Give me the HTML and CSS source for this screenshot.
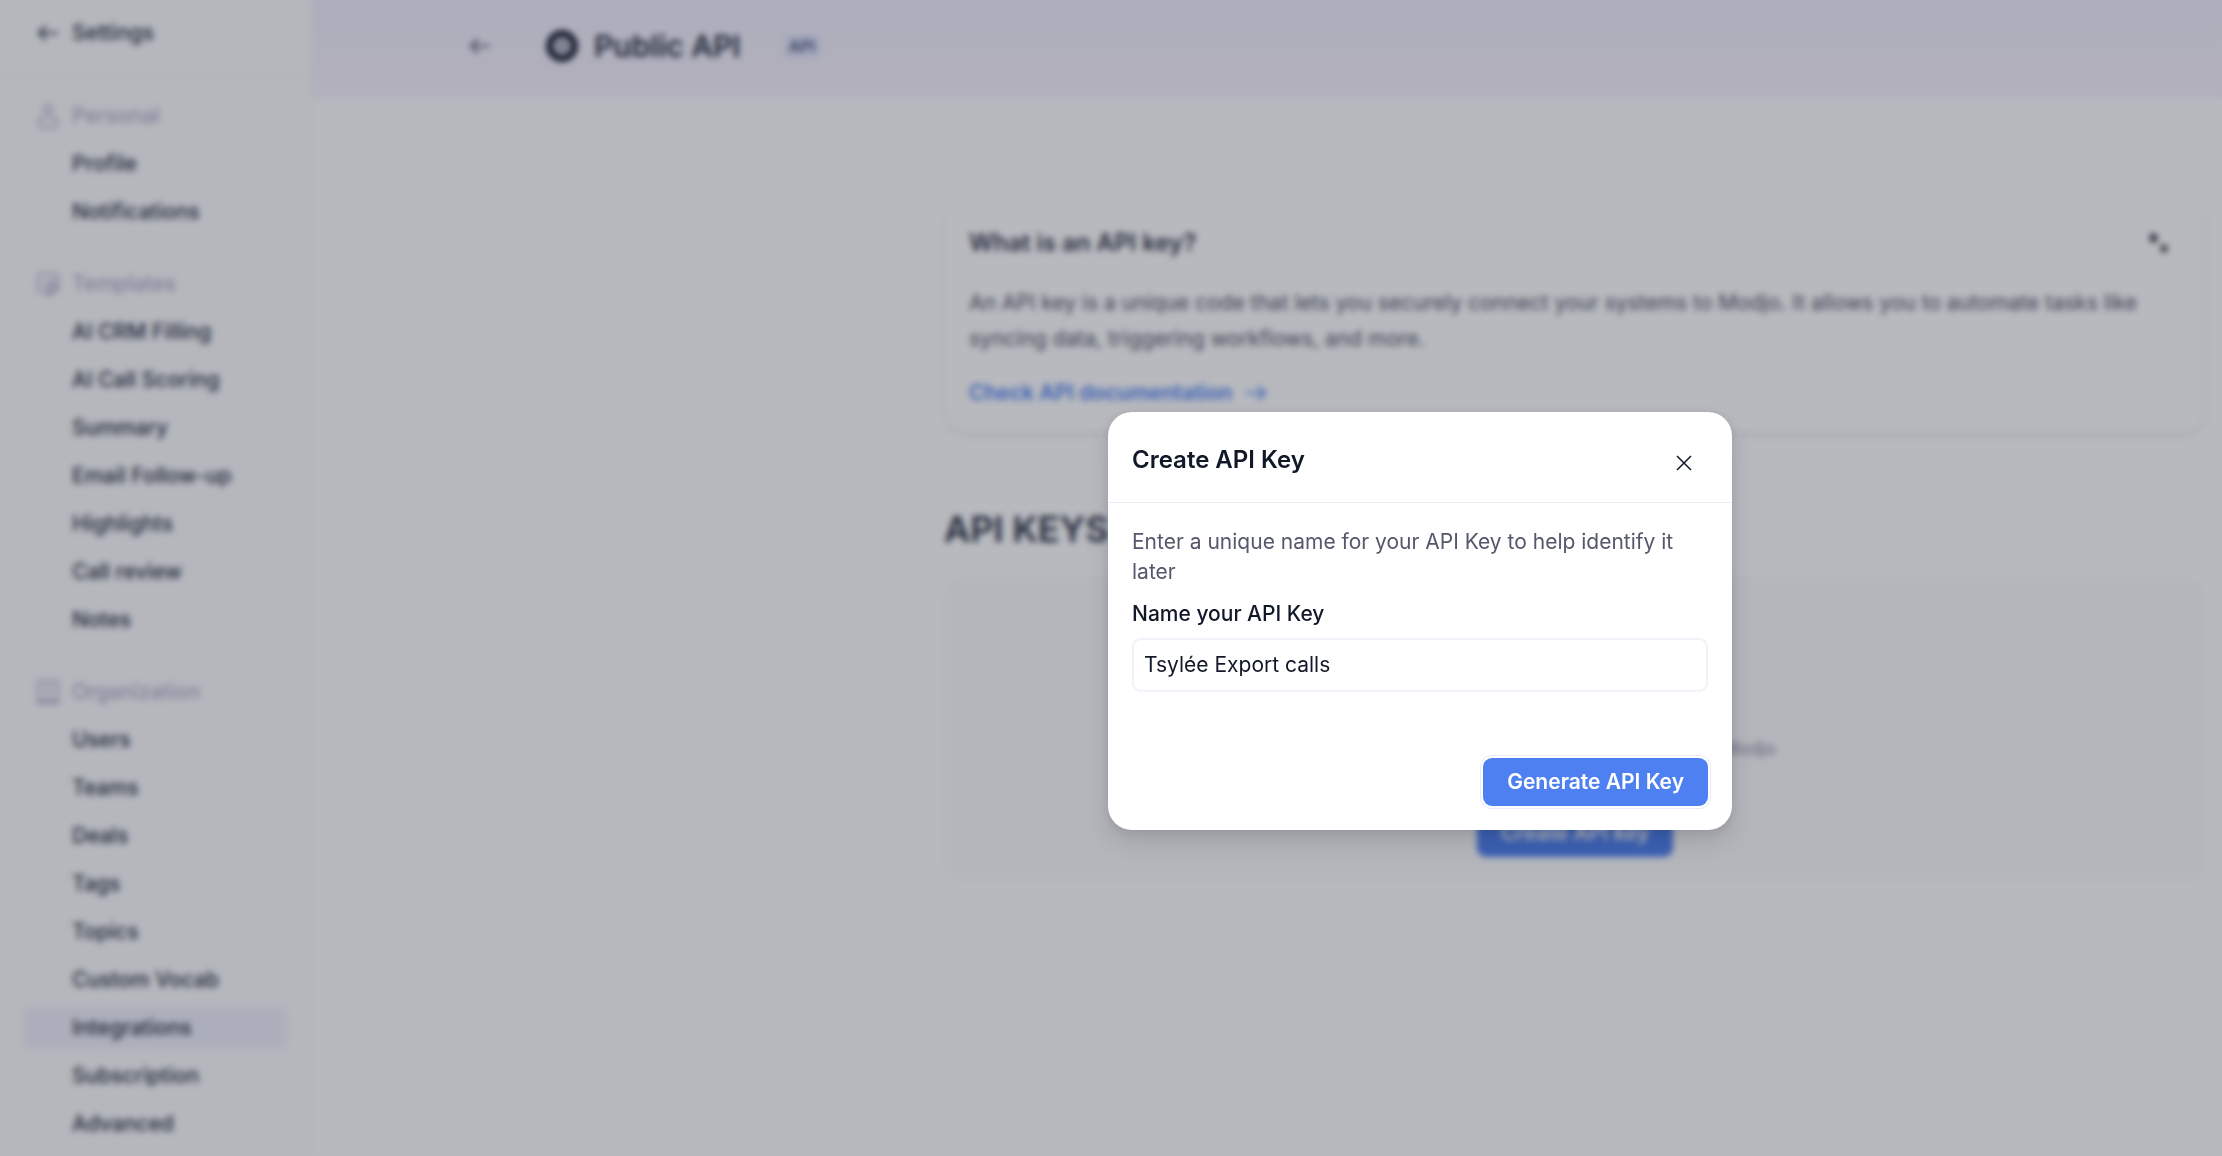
FILE: index.html
```
<!DOCTYPE html>
<html lang="en">
<head>
  <meta charset="UTF-8">
  <meta name="viewport" content="width=device-width, initial-scale=1.0">
  <title>Public API</title>
  <link rel="stylesheet" href="styles.css">
</head>

<body>
  <div class="app">
    <aside class="sidebar">
      <a class="sidebar_title" href="#">
        <svg class="icon" viewBox="0 0 24 24"><path d="M22 12H3M10 5l-7 7 7 7"/></svg>
        Settings
      </a>
      <nav class="menu">
        <section class="menu_group">
          <h2 class="menu_title">
            <svg class="icon" viewBox="0 0 24 24"><circle cx="12" cy="5" r="4"/><path d="M8 13h8c3 0 5 3 5 6 0 2-1 4-3 4H6c-2 0-3-2-3-4 0-3 2-6 5-6z"/></svg>
            Personal
          </h2>
          <a class="menu_link" href="#">Profile</a>
          <a class="menu_link" href="#">Notifications</a>
        </section>
        <section class="menu_group">
          <h2 class="menu_title">
            <svg class="icon" viewBox="0 0 24 24"><path d="M5 2h14a3 3 0 0 1 3 3v13l-10 5-10-5V5a3 3 0 0 1 3-3z"/><path d="M7 10l4 3 7-6M12 15v6l7-3v-7z"/></svg>
            Templates
          </h2>
          <a class="menu_link" href="#">AI CRM Filling</a>
          <a class="menu_link" href="#">AI Call Scoring</a>
          <a class="menu_link" href="#">Summary</a>
          <a class="menu_link" href="#">Email Follow-up</a>
          <a class="menu_link" href="#">Highlights</a>
          <a class="menu_link" href="#">Call review</a>
          <a class="menu_link" href="#">Notes</a>
        </section>
        <section class="menu_group">
          <h2 class="menu_title">
            <svg class="icon" viewBox="0 0 24 24"><rect x="2" y="1" width="20" height="22" rx="1"/><path d="M7 6h4M13 6h4M7 11h4M13 11h4M7 16h4M13 16h4M2 21h20"/></svg>
            Organization
          </h2>
          <a class="menu_link" href="#">Users</a>
          <a class="menu_link" href="#">Teams</a>
          <a class="menu_link" href="#">Deals</a>
          <a class="menu_link" href="#">Tags</a>
          <a class="menu_link" href="#">Topics</a>
          <a class="menu_link" href="#">Custom Vocab</a>
          <a class="menu_link active" href="#">Integrations</a>
          <a class="menu_link" href="#">Subscription</a>
          <a class="menu_link" href="#">Advanced</a>
        </section>
      </nav>
    </aside>

    <div class="page">
      <header class="page_header">
        <a class="back" href="#" aria-label="Back">
          <svg class="icon" viewBox="0 0 24 24"><path d="M22 12H3M10 5l-7 7 7 7"/></svg>
        </a>
        <svg class="logo" viewBox="0 0 32 32"><circle cx="16" cy="16" r="16" fill="#1c2436"/><circle cx="16" cy="16" r="9" fill="#d4d2de"/><path d="M10 14h12M10 18h12M14 10v12M18 10v12" stroke="#7d7d8c"/></svg>
        <h1>Public API</h1>
        <span class="badge">API</span>
      </header>

      <main class="content">
        <section class="info_card">
          <div class="info_head">
            <h3>What is an API key?</h3>
            <button class="collapse" aria-label="Collapse">
              <svg viewBox="0 0 20 20"><path d="M1 1h7v8H1zM12 12h6v7h-6z"/></svg>
            </button>
          </div>
          <p>An API key is a unique code that lets you securely connect your systems to Modjo. It allows you to automate tasks like syncing data, triggering workflows, and more.</p>
          <a class="doc_link" href="#">
            Check API documentation
            <svg class="icon" viewBox="0 0 24 24"><path d="M2 12h19M14 5l7 7-7 7"/></svg>
          </a>
        </section>

        <h2 class="keys_title">API KEYS</h2>
        <section class="empty_card">
          <p>Create your first API key to connect with Modjo</p>
          <button class="btn">Create API key</button>
        </section>
      </main>
    </div>
  </div>

  <div class="overlay">
    <form class="dialog" role="dialog" aria-labelledby="dialog_title">
      <header class="dialog_header">
        <h2 id="dialog_title">Create API Key</h2>
        <button type="button" class="close" aria-label="Close">
          <svg viewBox="0 0 16 16"><path d="M1 1l14 14M15 1L1 15"/></svg>
        </button>
      </header>
      <div class="dialog_body">
        <p>Enter a unique name for your API Key to help identify it later</p>
        <label for="key_name">Name your API Key</label>
        <input id="key_name" type="text" value="Tsylée Export calls" autocomplete="off">
      </div>
      <footer class="dialog_footer">
        <button type="submit" class="btn btn_generate">Generate API Key</button>
      </footer>
    </form>
  </div>
</body>
</html>
```
FILE: styles.css
```
* { box-sizing: border-box; }
body { margin: 0; font-family: Inter, "Liberation Sans", sans-serif; font-size: 21px; line-height: 30px; color: #111827; background: #fff; }
h1, h2, h3, p { margin: 0; }
a { color: inherit; text-decoration: none; }
button, input { font: inherit; color: inherit; }
button { border: none; padding: 0; background: none; cursor: pointer; }
.icon { width: 24px; height: 24px; flex: none; fill: none; stroke: currentColor; stroke-width: 2; }

.app { display: flex; height: 100vh; overflow: hidden; color: #272e40; }

/* sidebar */
.sidebar { flex: none; width: 312px; border-right: 1px solid #f3f3f8; background: #fcfcfe; font-weight: 500; }
.sidebar_title { display: flex; align-items: center; gap: 12px; height: 76px; padding: 0 36px 10px; border-bottom: 1px solid #f3f3f8; }
.menu { display: flex; flex-direction: column; gap: 24px; padding: 16px 24px; }
.menu_title { display: flex; align-items: center; gap: 12px; height: 48px; padding: 0 12px; font-size: 21px; font-weight: 500; color: #b1afca; }
.menu_link { display: flex; align-items: center; height: 42px; margin: 3px 0 6px; padding-left: 48px; border-radius: 9px; }
.menu_link:last-child { margin-bottom: 3px; }
.menu_link + .menu_link { margin-top: 0; }
.menu_link.active { background: #f0f0fb; }

/* page */
.page { flex: 1; min-width: 0; }
.page_header { display: flex; align-items: center; height: 98px; padding: 0 156px 6px; background: linear-gradient(#f2f0fd, #f8f2fd); }
.back { display: flex; margin-right: 54px; color: #4b5563; }
.logo { width: 32px; height: 32px; margin-right: 16px; }
.page_header h1 { margin-right: 42px; font-size: 30px; line-height: 36px; font-weight: 600; }
.badge { padding: 0 6px; border-radius: 4px; background: #e4e8fc; font-size: 16px; line-height: 24px; font-weight: 600; color: #4a5078; }

.content { padding: 102px 16px 0 632px; }
.info_card { padding: 24px; padding-bottom: 21px; border: 1px solid #f7f7fa; border-radius: 24px; box-shadow: 0 3px 4px rgba(0, 0, 0, 0.08); }
.info_head { display: flex; justify-content: space-between; align-items: center; height: 36px; margin-bottom: 24px; }
.info_head h3 { font-size: 24px; font-weight: 600; color: #33354a; }
.collapse { display: flex; margin-right: 12px; }
.collapse svg { width: 20px; height: 20px; fill: #33363f; }
.info_card p { line-height: 36px; color: #4f5166; }
.doc_link { display: flex; align-items: center; gap: 12px; margin-top: 18px; line-height: 36px; font-weight: 600; color: #4f80f1; }
.keys_title { margin: 72px 0 24px; font-size: 36px; line-height: 48px; font-weight: 600; }
.empty_card { display: flex; flex-direction: column; align-items: center; justify-content: flex-end; gap: 45px; min-height: 304px; padding: 24px; border-radius: 24px; background: #fbfbfc; }
.empty_card p { font-size: 18px; color: #8b8ba3; }

.btn { height: 48px; padding: 0 24px; border-radius: 9px; background: #4f80f1; font-weight: 600; color: #fff; }

/* dialog */
.overlay { position: fixed; inset: 0; display: flex; align-items: center; justify-content: center; padding: 85px 0 0 618px; background: rgba(17, 24, 39, 0.3); backdrop-filter: blur(3px); }
.dialog { width: 624px; border-radius: 24px; background: #fff; box-shadow: 0 12px 24px rgba(0, 0, 0, 0.12), 0 2px 8px rgba(0, 0, 0, 0.08); }
.dialog_header { display: flex; justify-content: space-between; align-items: center; height: 91px; padding: 6px 40px 0 24px; border-bottom: 1px solid #ebebf5; }
.dialog_header h2 { font-size: 24px; font-weight: 600; }
.close { display: flex; padding-top: 6px; }
.close svg { width: 16px; height: 16px; fill: none; stroke: #111827; stroke-width: 1.5; }
.dialog_body { display: flex; flex-direction: column; padding: 24px 24px 0; }
.dialog_body p { color: #55576b; }
.dialog_body label { margin: 12px 0 9px; font-weight: 500; }
.dialog_body input { height: 54px; padding: 0 10px; border: 2px solid #f2f1fa; border-radius: 9px; outline: none; background: #fff; }
.dialog_footer { display: flex; justify-content: flex-end; padding: 66px 24px 24px; }
.btn_generate { box-shadow: 0 0 0 2px #fff, 0 0 0 3px #ebebfa; }
```
